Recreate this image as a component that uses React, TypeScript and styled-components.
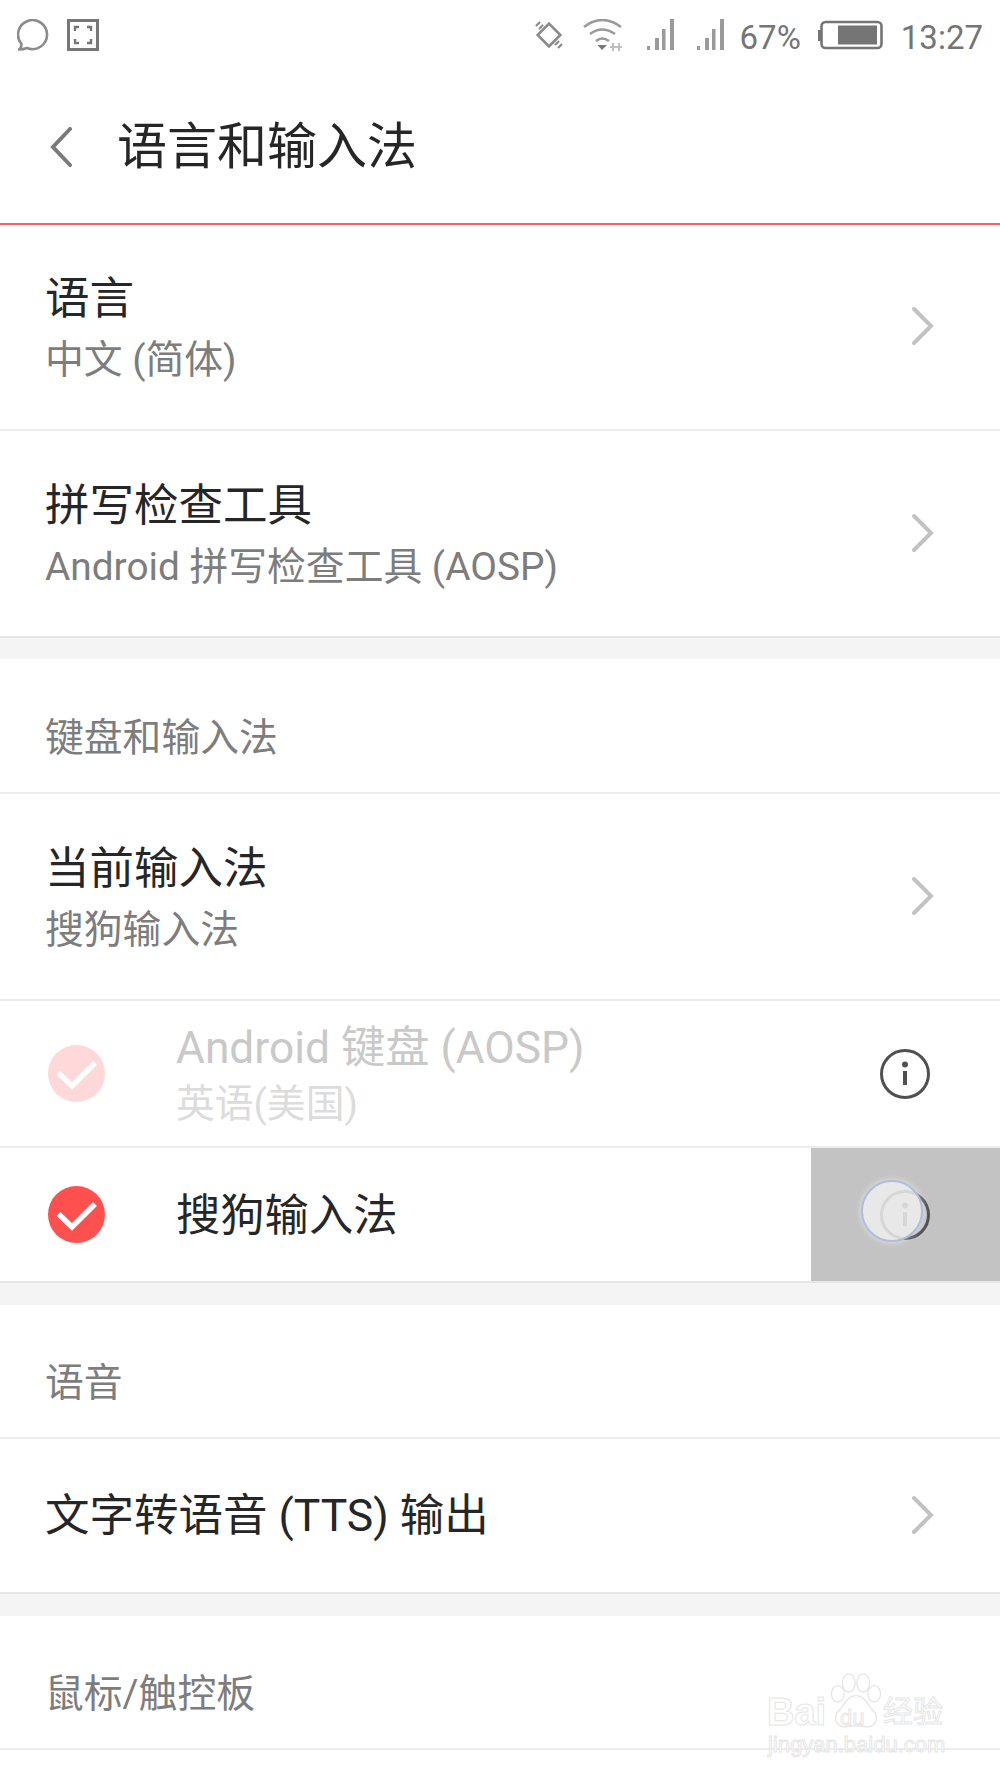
import React from "react";
import styled, { createGlobalStyle } from "styled-components";

const GlobalStyle = createGlobalStyle`
  html, body {
    margin: 0;
    padding: 0;
    background: #fff;
    font-family: Roboto, "Noto Sans CJK SC", sans-serif;
  }
`;

const Screen = styled.div`
  position: relative;
  width: 1000px;
  height: 1778px;
  overflow: hidden;
  background: #fff;
`;

const StatusBar = styled.div`
  display: flex;
  align-items: center;
  height: 70px;
  padding: 0 17px;
  color: #757575;
`;

const StatusGroup = styled.div`
  display: flex;
  align-items: center;
  gap: 18px;
`;

const StatusRight = styled.div`
  display: flex;
  align-items: center;
  margin-left: auto;
`;

const StatusText = styled.span<{ $left: number; $size: number }>`
  margin-left: ${(p) => p.$left}px;
  padding-top: 5px;
  font-size: ${(p) => p.$size}px;
  line-height: 70px;
`;

const IconSlot = styled.svg<{ $left?: number }>`
  display: block;
  flex: none;
  margin-left: ${(p) => p.$left ?? 0}px;
`;

const ChevronSlot = styled(IconSlot)`
  margin-bottom: 2px;
`;

const Header = styled.div`
  display: flex;
  align-items: center;
  height: 155px;
  padding-left: 50px;
  box-sizing: border-box;
  border-bottom: 2px solid #fa6060;
`;

const Title = styled.h1`
  margin: 0 0 0 45px;
  font-size: 50px;
  font-weight: 400;
  color: #262626;
  line-height: 1;
`;

const Row = styled.div<{ $height: number; $last?: boolean }>`
  display: flex;
  align-items: center;
  box-sizing: border-box;
  height: ${(p) => p.$height}px;
  padding: 0 65px 0 45px;
  border-bottom: 2px solid ${(p) => (p.$last ? "#e6e6e6" : "#ececec")};
`;

const RowText = styled.div<{ $single?: boolean }>`
  flex: 1;
  min-width: 0;
  padding-top: ${(p) => (p.$single ? 0 : 5)}px;
`;

const RowTitle = styled.div`
  font-size: 44.5px;
  line-height: 56px;
  color: #262626;
  white-space: nowrap;
`;

const RowSub = styled.div`
  font-size: 38.8px;
  line-height: 56px;
  margin-top: 5px;
  color: #7d7d7d;
  white-space: nowrap;
`;

const Gap = styled.div<{ $height: number }>`
  height: ${(p) => p.$height}px;
  background: #f4f4f4;
`;

const SectionLabel = styled.div<{ $height: number }>`
  display: flex;
  align-items: center;
  box-sizing: border-box;
  height: ${(p) => p.$height}px;
  padding: 16px 45px 0;
  font-size: 38.8px;
  color: #7d7d7d;
  border-bottom: 2px solid #ececec;
`;

const ImeRow = styled.div<{ $height: number; $last?: boolean }>`
  position: relative;
  display: flex;
  align-items: center;
  box-sizing: border-box;
  height: ${(p) => p.$height}px;
  padding: 0 70px 0 48px;
  border-bottom: 2px solid ${(p) => (p.$last ? "#e6e6e6" : "#ececec")};
`;

const CheckDot = styled.div<{ $faded?: boolean }>`
  position: relative;
  display: flex;
  align-items: center;
  justify-content: center;
  flex: none;
  width: 57px;
  height: 57px;
  border-radius: 50%;
  background: ${(p) => (p.$faded ? "#ffd9d9" : "#ff5050")};
`;

const ImeText = styled.div`
  position: relative;
  flex: 1;
  margin-left: 71px;
  padding-top: 3px;
`;

const ImeName = styled.div<{ $faded?: boolean }>`
  font-size: 44.3px;
  line-height: 56px;
  color: ${(p) => (p.$faded ? "#c9c9c9" : "#262626")};
  white-space: nowrap;
`;

const ImeSub = styled.div`
  font-size: 38.8px;
  line-height: 52px;
  margin-top: 2px;
  color: #dcdcdc;
  white-space: nowrap;
`;

const InfoWrap = styled.div`
  position: relative;
  z-index: 1;
`;

const PressBlock = styled.div`
  position: absolute;
  right: 0;
  top: 0;
  bottom: 0;
  width: 189px;
  background: #c3c3c3;
`;

const Ripple = styled.div`
  position: absolute;
  z-index: 2;
  right: 77px;
  top: 32px;
  box-sizing: border-box;
  width: 62px;
  height: 62px;
  border-radius: 50%;
  background: rgba(240, 240, 240, 0.84);
  border: 2px solid #b4bcdc;
  box-shadow: 0 0 6px rgba(255, 255, 255, 0.6);
`;

const Watermark = styled.div`
  position: absolute;
  left: 767px;
  top: 1672px;
  width: 190px;
  height: 90px;
  color: #fff;
  font-family: "Liberation Sans", "Noto Sans CJK SC", sans-serif;
  -webkit-text-stroke: 1px #e6e6e6;
`;

const MarkWord = styled.span<{ $x: number; $y: number; $size: number; $weight?: number }>`
  position: absolute;
  left: ${(p) => p.$x}px;
  top: ${(p) => p.$y}px;
  font-size: ${(p) => p.$size}px;
  font-weight: ${(p) => p.$weight ?? 700};
  line-height: 1;
  white-space: nowrap;
`;

const PawSvg = styled.svg`
  position: absolute;
  left: 61px;
  top: 0;
`;

function Chevron() {
  return (
    <ChevronSlot width="24" height="40" viewBox="0 0 24 40">
      <path d="M3 3 L20 20 L3 37" fill="none" stroke="#c2c2c2" strokeWidth="4" strokeLinecap="round" strokeLinejoin="miter" />
    </ChevronSlot>
  );
}

function Check() {
  return (
    <svg width="40" height="32" viewBox="0 0 40 32">
      <path d="M1.5 15 L15 28 L38 5" fill="none" stroke="#fff" strokeWidth="5.5" />
    </svg>
  );
}

function InfoIcon() {
  return (
    <InfoWrap>
      <IconSlot width="50" height="50" viewBox="0 0 50 50">
        <circle cx="25" cy="25" r="23.5" fill="none" stroke="#505050" strokeWidth="3" />
        <circle cx="25" cy="15.5" r="3" fill="#505050" />
        <rect x="23" y="22" width="4" height="14" fill="#505050" />
      </IconSlot>
    </InfoWrap>
  );
}

function SignalIcon({ left }: { left: number }) {
  return (
    <IconSlot $left={left} width="28" height="32" viewBox="0 0 28 32">
      <rect x="0" y="27" width="3" height="4" fill="#9a9a9a" />
      <rect x="8" y="19" width="4" height="12" fill="#9a9a9a" />
      <rect x="15" y="10" width="3.5" height="21" fill="#9a9a9a" />
      <rect x="23" y="0" width="4" height="31" fill="#9a9a9a" />
    </IconSlot>
  );
}

export default function App() {
  return (
    <Screen>
      <GlobalStyle />
      <StatusBar>
        <StatusGroup>
          <IconSlot width="32" height="32" viewBox="0 0 32 32">
            <path
              d="M4.5 25 A14.5 14.5 0 1 1 10 29 Q6 30.5 2 30.5 Q4.5 28.5 4.5 25 Z"
              fill="none"
              stroke="#8c8c8c"
              strokeWidth="2.6"
              strokeLinejoin="round"
            />
          </IconSlot>
          <IconSlot width="32" height="32" viewBox="0 0 32 32">
            <rect x="1.5" y="1.5" width="29" height="29" fill="none" stroke="#777" strokeWidth="3" />
            <path d="M8 12 V8 H12 M20 8 H24 V12 M24 20 V24 H20 M12 24 H8 V20" fill="none" stroke="#777" strokeWidth="2.4" />
          </IconSlot>
        </StatusGroup>
        <StatusRight>
          <IconSlot width="32" height="32" viewBox="0 0 32 32">
            <rect x="8" y="8" width="16" height="16" transform="rotate(45 16 16)" fill="none" stroke="#8a8a8a" strokeWidth="2.6" />
            <path d="M3 7 L7 3 M6 10 L10 6 M22 26 L26 22 M25 29 L29 25" stroke="#8a8a8a" strokeWidth="2.2" />
          </IconSlot>
          <IconSlot $left={18} width="40" height="32" viewBox="0 0 40 32">
            <path d="M1 8 Q19 -6 38 8 M7 15 Q19 6 32 15 M13 22 Q19 17 26 22" fill="none" stroke="#9a9a9a" strokeWidth="2.6" />
            <path d="M14.5 26 H24 L19 31 Z" fill="#777" />
            <path d="M30 24 V32 M36 24 V32 M27 28 H39" stroke="#c0c0c0" strokeWidth="2" />
          </IconSlot>
          <SignalIcon left={24} />
          <SignalIcon left={22} />
          <StatusText $left={15} $size={33}>67%</StatusText>
          <IconSlot $left={17} width="65" height="30" viewBox="0 0 65 30">
            <rect x="0" y="10" width="3" height="11" fill="#757575" />
            <rect x="3.5" y="2" width="60" height="26" rx="4" fill="none" stroke="#757575" strokeWidth="2.6" />
            <rect x="20" y="5.5" width="39" height="19" fill="#757575" />
          </IconSlot>
          <StatusText $left={18} $size={33}>13:27</StatusText>
        </StatusRight>
      </StatusBar>

      <Header>
        <IconSlot width="22" height="40" viewBox="0 0 22 40">
          <path d="M20 2 L3 20 L20 38" fill="none" stroke="#7a7a7a" strokeWidth="4" strokeLinecap="round" />
        </IconSlot>
        <Title>语言和输入法</Title>
      </Header>

      <Row $height={206}>
        <RowText>
          <RowTitle>语言</RowTitle>
          <RowSub>中文 (简体)</RowSub>
        </RowText>
        <Chevron />
      </Row>
      <Row $height={207} $last>
        <RowText>
          <RowTitle>拼写检查工具</RowTitle>
          <RowSub>Android 拼写检查工具 (AOSP)</RowSub>
        </RowText>
        <Chevron />
      </Row>
      <Gap $height={21} />
      <SectionLabel $height={135}>键盘和输入法</SectionLabel>
      <Row $height={207}>
        <RowText>
          <RowTitle>当前输入法</RowTitle>
          <RowSub>搜狗输入法</RowSub>
        </RowText>
        <Chevron />
      </Row>
      <ImeRow $height={147}>
        <CheckDot $faded>
          <Check />
        </CheckDot>
        <ImeText>
          <ImeName $faded>Android 键盘 (AOSP)</ImeName>
          <ImeSub>英语(美国)</ImeSub>
        </ImeText>
        <InfoIcon />
      </ImeRow>
      <ImeRow $height={135} $last>
        <PressBlock />
        <CheckDot>
          <Check />
        </CheckDot>
        <ImeText>
          <ImeName>搜狗输入法</ImeName>
        </ImeText>
        <InfoIcon />
        <Ripple />
      </ImeRow>
      <Gap $height={22} />
      <SectionLabel $height={134}>语音</SectionLabel>
      <Row $height={155} $last>
        <RowText $single>
          <RowTitle>文字转语音 (TTS) 输出</RowTitle>
        </RowText>
        <Chevron />
      </Row>
      <Gap $height={22} />
      <SectionLabel $height={134}>鼠标/触控板</SectionLabel>

      <Watermark>
        <PawSvg width="56" height="60" viewBox="0 0 60 66">
          <g fill="#fff" stroke="#e6e6e6" strokeWidth="1.5">
            <ellipse cx="10" cy="24" rx="7" ry="9" />
            <ellipse cx="22" cy="12" rx="7" ry="10" />
            <ellipse cx="38" cy="12" rx="7" ry="10" />
            <ellipse cx="50" cy="24" rx="7" ry="9" />
            <path d="M30 26 C40 26 44 38 50 44 C56 52 50 62 40 60 C34 59 26 59 20 60 C10 62 4 52 10 44 C16 38 20 26 30 26 Z" />
          </g>
        </PawSvg>
        <MarkWord $x={0} $y={21} $size={38}>Bai</MarkWord>
        <MarkWord $x={73} $y={35} $size={22} $weight={400}>du</MarkWord>
        <MarkWord $x={116} $y={25} $size={30} $weight={400}>经验</MarkWord>
        <MarkWord $x={1} $y={62} $size={22} $weight={400}>jingyan.baidu.com</MarkWord>
      </Watermark>
    </Screen>
  );
}
